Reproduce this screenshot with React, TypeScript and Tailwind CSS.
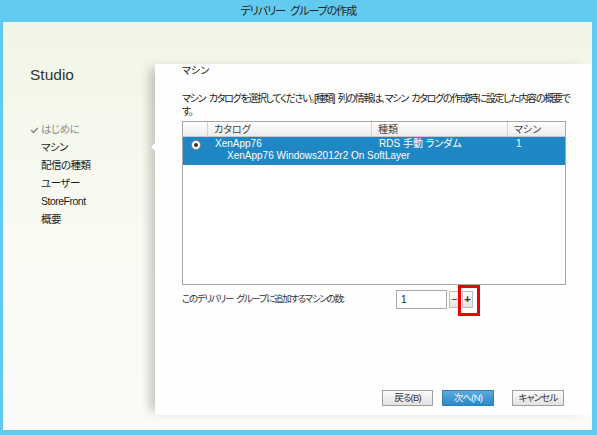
import { Check } from "lucide-react";

function Radio() {
  return (
    <span className="flex h-[10px] w-[10px] items-center justify-center rounded-full border border-[#8a8a8a] bg-white">
      <span className="h-[4px] w-[4px] rounded-full bg-[#333]" />
    </span>
  );
}

export default function App() {
  const steps = ["マシン", "配信の種類", "ユーザー", "StoreFront", "概要"];

  return (
    <div className="flex h-[435px] w-[597px] flex-col overflow-hidden bg-[#62c9ef] font-['Liberation_Sans','Noto_Sans_CJK_JP',sans-serif] text-[10px] text-[#1a1a1a] [font-feature-settings:'palt']">
      {/* Title bar */}
      <div className="flex h-[22px] shrink-0 items-center justify-center text-[11px] tracking-[-1px] text-[#222] [word-spacing:3px]">
        デリバリー グループの作成
      </div>

      {/* Window body */}
      <div className="mb-[5px] ml-[3px] mr-[5px] flex min-w-0 flex-1 bg-gradient-to-b from-[#f1f5e5] via-[#f9fbf3] to-[#fbfcf8]">
        {/* Sidebar */}
        <div className="w-[152px] shrink-0 pl-[27px] pt-[43px]">
          <div className="text-[15.5px] leading-[20px] text-[#333]">Studio</div>
          <div className="mt-[36px] flex flex-col text-[10.5px] tracking-[-0.5px]">
            <div className="flex h-[18px] items-center text-[#8c8c8c]">
              <Check className="mr-[2px] h-[9px] w-[9px]" strokeWidth={4} />
              はじめに
            </div>
            {steps.map((s) => (
              <div key={s} className="flex h-[18px] items-center pl-[11px]">
                {s}
              </div>
            ))}
          </div>
        </div>

        {/* Main panel */}
        <div className="flex min-w-0 flex-1 pb-[15px] pt-[42px]">
          <div className="relative flex min-w-0 flex-1 flex-col bg-white/85 pl-[27px] pr-[26px] shadow-[-9px_0_10px_-4px_rgba(0,0,0,0.22)]">
            {/* pointer notch */}
            <span className="absolute left-[-4px] top-[79px] h-0 w-0 border-y-[4px] border-r-[4px] border-y-transparent border-r-white" />

            <div className="leading-[13px]">マシン</div>
            <div className="mt-[15px] whitespace-nowrap leading-[13px] tracking-[-1.3px] [word-spacing:2px]">
              マシン カタログを選択してください。[種類] 列の情報は、マシン カタログの作成時に設定した内容の概要で
              <br />
              す。
            </div>

            {/* Table */}
            <div className="mt-[3px] h-[164px] w-[384px] border border-[#a8a8a8] bg-white">
              <div className="flex h-[15px] border-b border-[#c8c8c8] bg-gradient-to-b from-white to-[#ececec] text-[#444]">
                <div className="w-[25px] border-r border-[#d0d0d0]" />
                <div className="w-[164px] border-r border-[#d0d0d0] pl-[6px] leading-[15px]">
                  カタログ
                </div>
                <div className="w-[136px] border-r border-[#d0d0d0] pl-[6px] leading-[15px]">
                  種類
                </div>
                <div className="flex-1 pl-[6px] leading-[15px]">マシン</div>
              </div>
              <div className="flex h-[28px] bg-[#1f87c4] text-white">
                <div className="flex w-[26px] justify-center pt-[3px]">
                  <Radio />
                </div>
                <div className="w-[164px] pl-[6px] pt-[1px] leading-[12px]">
                  <div>XenApp76</div>
                  <div className="whitespace-nowrap pl-[12px]">
                    XenApp76 Windows2012r2 On SoftLayer
                  </div>
                </div>
                <div className="w-[136px] pl-[6px] pt-[1px] leading-[12px]">
                  RDS 手動 ランダム
                </div>
                <div className="flex-1 pl-[7px] pt-[1px] leading-[12px]">1</div>
              </div>
            </div>

            {/* Count row */}
            <div className="mt-[5px] flex h-[19px] w-[384px] items-center">
              <span className="flex-1 whitespace-nowrap text-[9.5px] tracking-[-1.3px] text-[#333] [word-spacing:2px]">
                このデリバリー グループに追加するマシンの数:
              </span>
              <div className="mr-[93px] flex items-center">
                <div className="flex h-[19px] w-[51px] items-center border border-[#a8a8a8] bg-white pl-[4px]">
                  1
                </div>
                <button className="ml-[2px] flex h-[17px] w-[11px] items-center justify-center border border-[#bdbdbd] bg-gradient-to-b from-white to-[#e3e3e3] text-[11px] leading-none text-[#333]">
                  −
                </button>
                <button className="relative ml-[2px] flex h-[17px] w-[11px] items-center justify-center border border-[#bdbdbd] bg-gradient-to-b from-white to-[#e3e3e3] text-[11px] font-bold leading-none text-[#333]">
                  +
                  <span className="absolute left-[-5px] top-[-7px] h-[31px] w-[22px] border-[3px] border-[#ee0000]" />
                </button>
              </div>
            </div>

            <div className="flex-1" />

            {/* Buttons */}
            <div className="mb-[9px] flex justify-end pr-[2px] text-[9.5px] tracking-[-0.8px]">
              <button className="h-[16px] w-[51px] whitespace-nowrap border border-[#9e9e9e] bg-gradient-to-b from-[#fbfbfb] to-[#e2e2e2] leading-[14px] text-[#333]">
                戻る(B)
              </button>
              <button className="ml-[9px] h-[16px] w-[52px] whitespace-nowrap border border-[#2f7fb8] bg-gradient-to-b from-[#5aace0] to-[#2a88c8] leading-[14px] text-white">
                次へ(N)
              </button>
              <button className="ml-[18px] h-[16px] w-[52px] whitespace-nowrap border border-[#9e9e9e] bg-gradient-to-b from-[#fbfbfb] to-[#e2e2e2] leading-[14px] text-[#333]">
                キャンセル
              </button>
            </div>
          </div>
        </div>
      </div>
    </div>
  );
}
